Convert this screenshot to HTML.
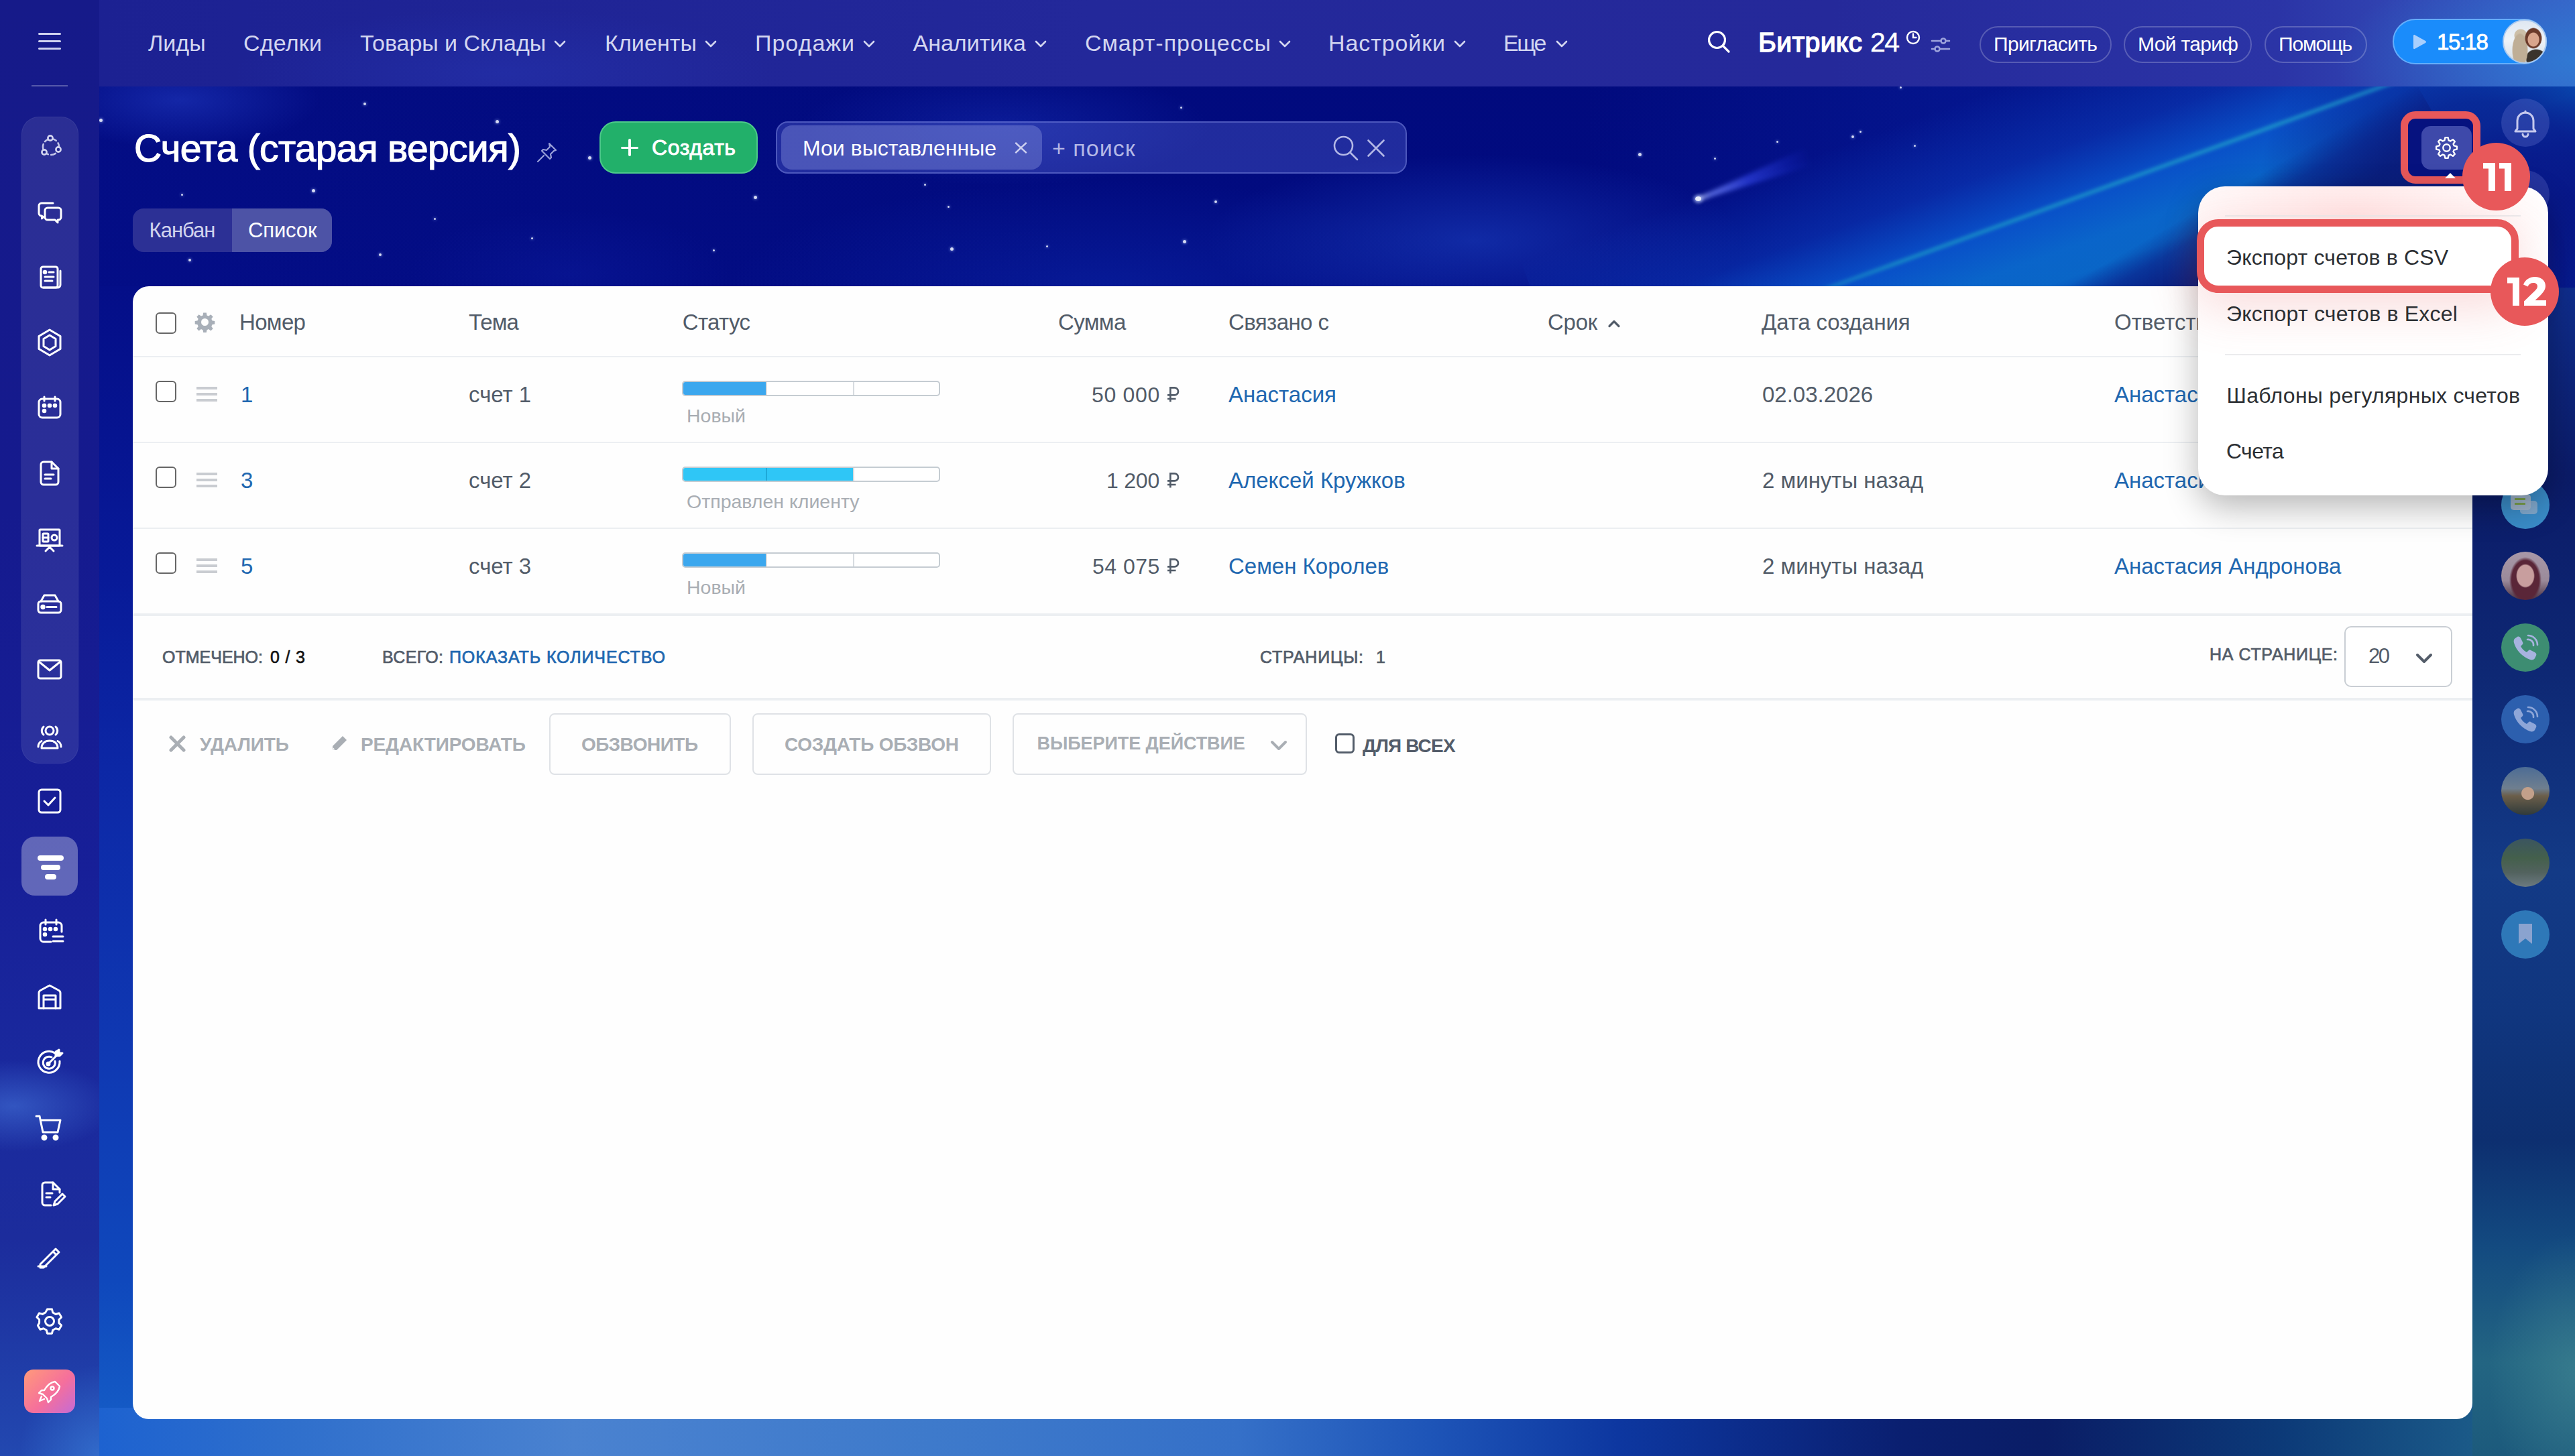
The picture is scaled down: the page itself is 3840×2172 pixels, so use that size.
<!DOCTYPE html>
<html><head><meta charset="utf-8"><style>
*{margin:0;padding:0;box-sizing:border-box}
html,body{width:3840px;height:2172px;overflow:hidden;font-family:"Liberation Sans",sans-serif}
body{position:relative;background:#020b80}
.a{position:absolute}
.t{position:absolute;white-space:nowrap;line-height:1}
svg{position:absolute;overflow:visible}
</style></head><body>
<div class="a" style="left:0;top:0;width:3840px;height:2172px;background:linear-gradient(180deg,#010a7c 0%,#020c84 30%,#041a9c 60%,#0a40b8 85%,#1458c0 100%)"></div>
<div class="a" style="left:148px;top:129px;width:3692px;height:300px;background:
 radial-gradient(ellipse 260px 90px at 120px 20px, rgba(40,70,210,.45), rgba(0,0,0,0) 80%),
 radial-gradient(ellipse 380px 110px at 1350px 60px, rgba(30,60,200,.35), rgba(0,0,0,0) 80%),
 radial-gradient(ellipse 500px 160px at 2050px 230px, rgba(35,80,210,.45), rgba(0,0,0,0) 80%),
 radial-gradient(ellipse 700px 200px at 1500px 300px, rgba(20,60,200,.3), rgba(0,0,0,0) 80%),
 radial-gradient(ellipse 300px 120px at 700px 280px, rgba(20,40,180,.25), rgba(0,0,0,0) 80%),
 linear-gradient(90deg, rgba(10,20,150,.25) 0%, rgba(0,0,0,0) 40%, rgba(0,0,0,0) 60%, rgba(10,40,170,.35) 75%, rgba(20,90,200,.2) 100%)"></div>
<div class="a" style="left:2300px;top:50px;width:1900px;height:520px;transform:rotate(-20deg);transform-origin:50% 50%;
 background:linear-gradient(180deg, rgba(0,0,0,0) 0%, rgba(15,80,210,.35) 22%, rgba(10,95,215,.8) 38%, rgba(10,105,205,.95) 50%, rgba(10,110,205,.9) 58%, rgba(8,70,180,.55) 72%, rgba(8,30,130,.25) 85%, rgba(0,0,0,0) 100%)"></div>
<div class="a" style="left:3300px;top:129px;width:540px;height:320px;background:radial-gradient(ellipse 330px 260px at 400px 140px, rgba(8,22,135,.92) 0%, rgba(8,22,135,.75) 45%, rgba(8,22,135,0) 100%)"></div>
<div class="a" style="left:2950px;top:300px;width:700px;height:300px;transform:rotate(-30deg);transform-origin:50% 0;
 background:linear-gradient(180deg, rgba(10,30,130,0) 0%, rgba(10,30,130,.55) 12%, rgba(10,28,120,.85) 30%, rgba(10,28,120,.9) 100%)"></div>
<div class="a" style="left:2500px;top:236px;width:1500px;height:6px;transform:rotate(-20deg);transform-origin:50% 50%;
 background:linear-gradient(90deg, rgba(30,170,200,0) 0%, rgba(30,170,200,.6) 20%, rgba(35,175,205,.65) 60%, rgba(40,170,220,.35) 100%);filter:blur(2.5px)"></div>
<div class="a" style="left:2530px;top:284px;width:180px;height:28px;transform:rotate(-21deg);transform-origin:0 50%;filter:blur(3px)">
 <div class="a" style="left:0;top:0;width:180px;height:28px;clip-path:polygon(0 42%, 100% 0, 100% 100%, 0 58%);
 background:linear-gradient(90deg, rgba(220,230,255,.95) 0%, rgba(120,140,255,.75) 12%, rgba(60,80,250,.55) 45%, rgba(40,60,240,.2) 80%, rgba(30,50,230,0) 100%)"></div></div>
<div class="a" style="left:2528px;top:293px;width:9px;height:7px;border-radius:50%;background:rgba(240,245,255,.95);box-shadow:0 0 5px 2px rgba(180,200,255,.7)"></div>
<div class="a" style="left:542.0px;top:153.0px;width:4px;height:4px;border-radius:50%;background:rgba(235,240,255,.9);box-shadow:0 0 4px rgba(180,200,255,.8)"></div>
<div class="a" style="left:738.5px;top:178.5px;width:5px;height:5px;border-radius:50%;background:rgba(235,240,255,.9);box-shadow:0 0 4px rgba(180,200,255,.8)"></div>
<div class="a" style="left:147.5px;top:176.5px;width:5px;height:5px;border-radius:50%;background:rgba(235,240,255,.9);box-shadow:0 0 4px rgba(180,200,255,.8)"></div>
<div class="a" style="left:876.5px;top:232.5px;width:5px;height:5px;border-radius:50%;background:rgba(235,240,255,.9);box-shadow:0 0 4px rgba(180,200,255,.8)"></div>
<div class="a" style="left:464.5px;top:281.5px;width:5px;height:5px;border-radius:50%;background:rgba(235,240,255,.9);box-shadow:0 0 4px rgba(180,200,255,.8)"></div>
<div class="a" style="left:1123.5px;top:291.5px;width:5px;height:5px;border-radius:50%;background:rgba(235,240,255,.9);box-shadow:0 0 4px rgba(180,200,255,.8)"></div>
<div class="a" style="left:1062.5px;top:371.5px;width:3px;height:3px;border-radius:50%;background:rgba(235,240,255,.9);box-shadow:0 0 4px rgba(180,200,255,.8)"></div>
<div class="a" style="left:646.5px;top:324.5px;width:3px;height:3px;border-radius:50%;background:rgba(235,240,255,.9);box-shadow:0 0 4px rgba(180,200,255,.8)"></div>
<div class="a" style="left:269.5px;top:288.5px;width:3px;height:3px;border-radius:50%;background:rgba(235,240,255,.9);box-shadow:0 0 4px rgba(180,200,255,.8)"></div>
<div class="a" style="left:565.0px;top:378.0px;width:4px;height:4px;border-radius:50%;background:rgba(235,240,255,.9);box-shadow:0 0 4px rgba(180,200,255,.8)"></div>
<div class="a" style="left:281.0px;top:386.0px;width:4px;height:4px;border-radius:50%;background:rgba(235,240,255,.9);box-shadow:0 0 4px rgba(180,200,255,.8)"></div>
<div class="a" style="left:791.5px;top:353.5px;width:3px;height:3px;border-radius:50%;background:rgba(235,240,255,.9);box-shadow:0 0 4px rgba(180,200,255,.8)"></div>
<div class="a" style="left:1759.5px;top:158.5px;width:3px;height:3px;border-radius:50%;background:rgba(235,240,255,.9);box-shadow:0 0 4px rgba(180,200,255,.8)"></div>
<div class="a" style="left:1763.5px;top:357.5px;width:5px;height:5px;border-radius:50%;background:rgba(235,240,255,.9);box-shadow:0 0 4px rgba(180,200,255,.8)"></div>
<div class="a" style="left:1416.5px;top:368.5px;width:5px;height:5px;border-radius:50%;background:rgba(235,240,255,.9);box-shadow:0 0 4px rgba(180,200,255,.8)"></div>
<div class="a" style="left:1377.5px;top:273.5px;width:3px;height:3px;border-radius:50%;background:rgba(235,240,255,.9);box-shadow:0 0 4px rgba(180,200,255,.8)"></div>
<div class="a" style="left:1811.0px;top:299.0px;width:4px;height:4px;border-radius:50%;background:rgba(235,240,255,.9);box-shadow:0 0 4px rgba(180,200,255,.8)"></div>
<div class="a" style="left:1412.5px;top:306.5px;width:3px;height:3px;border-radius:50%;background:rgba(235,240,255,.9);box-shadow:0 0 4px rgba(180,200,255,.8)"></div>
<div class="a" style="left:1559.5px;top:365.5px;width:3px;height:3px;border-radius:50%;background:rgba(235,240,255,.9);box-shadow:0 0 4px rgba(180,200,255,.8)"></div>
<div class="a" style="left:2442.5px;top:227.5px;width:5px;height:5px;border-radius:50%;background:rgba(235,240,255,.9);box-shadow:0 0 4px rgba(180,200,255,.8)"></div>
<div class="a" style="left:2555.5px;top:234.5px;width:3px;height:3px;border-radius:50%;background:rgba(235,240,255,.9);box-shadow:0 0 4px rgba(180,200,255,.8)"></div>
<div class="a" style="left:2761.0px;top:202.0px;width:4px;height:4px;border-radius:50%;background:rgba(235,240,255,.9);box-shadow:0 0 4px rgba(180,200,255,.8)"></div>
<div class="a" style="left:2772.5px;top:194.5px;width:3px;height:3px;border-radius:50%;background:rgba(235,240,255,.9);box-shadow:0 0 4px rgba(180,200,255,.8)"></div>
<div class="a" style="left:2648.5px;top:209.5px;width:3px;height:3px;border-radius:50%;background:rgba(235,240,255,.9);box-shadow:0 0 4px rgba(180,200,255,.8)"></div>
<div class="a" style="left:2853.5px;top:215.5px;width:3px;height:3px;border-radius:50%;background:rgba(235,240,255,.9);box-shadow:0 0 4px rgba(180,200,255,.8)"></div>
<div class="a" style="left:2832.5px;top:128.5px;width:3px;height:3px;border-radius:50%;background:rgba(235,240,255,.9);box-shadow:0 0 4px rgba(180,200,255,.8)"></div>
<div class="a" style="left:148px;top:427px;width:60px;height:1745px;background:linear-gradient(180deg,#040e88 0%,#081a98 25%,#0d2aa8 45%,#0f38b2 65%,#0f48bc 85%,#1660c8 100%)"></div>
<div class="a" style="left:3687px;top:429px;width:153px;height:1743px;background:
 radial-gradient(ellipse 160px 260px at 153px 1620px, rgba(70,140,150,.55), rgba(0,0,0,0) 80%),
 linear-gradient(180deg,#0f2d8c 0%,#0b1b68 16%,#0e2874 33%,#133a86 50%,#10367f 62%,#0d2f70 73%,#134a80 82%,#236582 92%,#1c5a7c 100%)"></div>
<div class="a" style="left:148px;top:2100px;width:3539px;height:72px;background:
 linear-gradient(90deg, #1d62d0 0%, #2f6fcc 8%, #4a82d0 20%, #3e7acb 35%, #3570c8 48%, #1e55b8 56%, #0d37a0 64%, #0a1f70 76%, #0a1d66 82%, #0c3a78 92%, #1b5a88 100%)"></div>
<div class="a" style="left:0;top:0;width:148px;height:2172px;background:
 radial-gradient(ellipse 180px 80px at 20px 1650px, rgba(70,120,220,.55), rgba(0,0,0,0) 85%),
 radial-gradient(ellipse 140px 160px at 148px 2172px, rgba(60,130,220,.6), rgba(0,0,0,0) 85%),
 linear-gradient(180deg,#161a89 0%,#151a8e 35%,#171f98 60%,#1a2a9e 75%,#1c2c9c 85%,#2248b0 100%)"></div>
<div class="a" style="left:47px;top:127px;width:54px;height:2px;background:rgba(255,255,255,.28)"></div>
<div class="a" style="left:32px;top:174px;width:85px;height:965px;border-radius:26px;background:rgba(255,255,255,.09);border:1px solid rgba(255,255,255,.06)"></div>
<div class="a" style="left:32px;top:1248px;width:84px;height:88px;border-radius:20px;background:rgba(255,255,255,.32)"></div>
<div class="a" style="left:36px;top:2043px;width:76px;height:65px;border-radius:14px;background:linear-gradient(135deg,#ff9a7a 0%,#f56f9c 55%,#c46bd6 100%)"></div>
<div class="a" style="left:57px;top:49px;width:34px;height:3px;border-radius:2px;background:#cfd2ef"></div>
<div class="a" style="left:57px;top:60px;width:34px;height:3px;border-radius:2px;background:#cfd2ef"></div>
<div class="a" style="left:57px;top:71px;width:34px;height:3px;border-radius:2px;background:#cfd2ef"></div>
<svg style="left:54.0px;top:196.5px" width="44" height="44" viewBox="0 0 44 44" fill="none" stroke="#d4d6f0" stroke-width="2.6" stroke-linecap="round" stroke-linejoin="round" opacity="1"><circle cx="22" cy="22" r="12" stroke-dasharray="7 4.5" opacity=".9"/><circle cx="21" cy="9" r="3.6" fill="#24288f"/><circle cx="33" cy="26" r="3.6" fill="#24288f"/><circle cx="12" cy="30" r="3.6" fill="#24288f"/></svg>
<svg style="left:52.0px;top:294.0px" width="44" height="44" viewBox="0 0 44 44" fill="none" stroke="#ffffff" stroke-width="3" stroke-linecap="round" stroke-linejoin="round" opacity="1"><path d="M27 9H10a4 4 0 0 0-4 4v11a4 4 0 0 0 4 4h0.5v4l3-3"/><path d="M19 16h16a4 4 0 0 1 4 4v10a4 4 0 0 1-4 4h-1v4l-4-4H19a4 4 0 0 1-4-4V20a4 4 0 0 1 4-4z"/></svg>
<svg style="left:53.0px;top:391.0px" width="44" height="44" viewBox="0 0 44 44" fill="none" stroke="#ffffff" stroke-width="3" stroke-linecap="round" stroke-linejoin="round" opacity="1"><rect x="8" y="7" width="25" height="31" rx="3"/><path d="M37 13v21a4 4 0 0 1-4 4H12"/><circle cx="14" cy="15" r="1.8" fill="#fff"/><path d="M20 15h7M14 22h13M14 28h11"/></svg>
<svg style="left:52.0px;top:489.0px" width="44" height="44" viewBox="0 0 44 44" fill="none" stroke="#ffffff" stroke-width="3" stroke-linecap="round" stroke-linejoin="round" opacity="1"><path d="M22 3 38 12.5v19L22 41 6 31.5v-19z"/><path d="M22 11 31 16.5v11L22 33 13 27.5v-11z"/></svg>
<svg style="left:52.0px;top:586.0px" width="44" height="44" viewBox="0 0 44 44" fill="none" stroke="#ffffff" stroke-width="3" stroke-linecap="round" stroke-linejoin="round" opacity="1"><rect x="6" y="9" width="32" height="28" rx="5"/><path d="M14 6v6M30 6v6"/><circle cx="14" cy="19" r="1.8" fill="#fff"/><circle cx="22" cy="19" r="1.8" fill="#fff"/><circle cx="30" cy="19" r="1.8" fill="#fff"/><circle cx="14" cy="27" r="1.8" fill="#fff"/></svg>
<svg style="left:52.0px;top:684.0px" width="44" height="44" viewBox="0 0 44 44" fill="none" stroke="#ffffff" stroke-width="3" stroke-linecap="round" stroke-linejoin="round" opacity="1"><path d="M25 5H13a4 4 0 0 0-4 4v26a4 4 0 0 0 4 4h18a4 4 0 0 0 4-4V15z"/><path d="M25 5v10h10"/><path d="M15 24h13M15 30h9"/></svg>
<svg style="left:52.0px;top:785.0px" width="44" height="44" viewBox="0 0 44 44" fill="none" stroke="#ffffff" stroke-width="3" stroke-linecap="round" stroke-linejoin="round" opacity="1"><rect x="7" y="5" width="30" height="24" rx="1"/><path d="M3 29h38M16 37l6-6 6 6"/><rect x="12" y="11" width="8" height="12" rx="1"/><path d="M12 17h8"/><circle cx="29" cy="17" r="4"/></svg>
<svg style="left:52.0px;top:879.0px" width="44" height="44" viewBox="0 0 44 44" fill="none" stroke="#ffffff" stroke-width="3" stroke-linecap="round" stroke-linejoin="round" opacity="1"><path d="M9 18 14 9h16l5 9"/><rect x="5" y="18" width="34" height="17" rx="4"/><circle cx="12" cy="26.5" r="2.2" fill="#fff"/><path d="M18 26.5h14"/></svg>
<svg style="left:52.4px;top:977.0px" width="44" height="44" viewBox="0 0 44 44" fill="none" stroke="#ffffff" stroke-width="3" stroke-linecap="round" stroke-linejoin="round" opacity="1"><rect x="5" y="8" width="34" height="27" rx="3"/><path d="M6 10l16 13 16-13"/></svg>
<svg style="left:52.0px;top:1075.5px" width="44" height="44" viewBox="0 0 44 44" fill="none" stroke="#ffffff" stroke-width="3" stroke-linecap="round" stroke-linejoin="round" opacity="1"><circle cx="22" cy="14" r="6"/><path d="M10 40c0-7 5-11 12-11s12 4 12 11z"/><path d="M13 8a8 8 0 0 0 0 12M31 8a8 8 0 0 1 0 12M5 38c0-4 2-7 5-8.5M39 38c0-4-2-7-5-8.5"/></svg>
<svg style="left:52.0px;top:1173.0px" width="44" height="44" viewBox="0 0 44 44" fill="none" stroke="#ffffff" stroke-width="3" stroke-linecap="round" stroke-linejoin="round" opacity="1"><rect x="6" y="5" width="32" height="34" rx="4"/><path d="M14 22l6 6 10-11"/></svg>
<svg style="left:53.6px;top:1366.5px" width="44" height="44" viewBox="0 0 44 44" fill="none" stroke="#ffffff" stroke-width="3" stroke-linecap="round" stroke-linejoin="round" opacity="1"><path d="M22 38H11a5 5 0 0 1-5-5V14a5 5 0 0 1 5-5h22a5 5 0 0 1 5 5v9"/><path d="M14 5v7M30 5v7"/><circle cx="13" cy="19" r="1.8" fill="#fff"/><circle cx="21" cy="19" r="1.8" fill="#fff"/><circle cx="29" cy="19" r="1.8" fill="#fff"/><circle cx="13" cy="27" r="1.8" fill="#fff"/><path d="M25 30h15M25 37h15"/></svg>
<svg style="left:52.0px;top:1465.0px" width="44" height="44" viewBox="0 0 44 44" fill="none" stroke="#ffffff" stroke-width="3" stroke-linecap="round" stroke-linejoin="round" opacity="1"><path d="M6 39V16c0-2 1-3 3-4l13-7 13 7c2 1 3 2 3 4v23z"/><path d="M13 39V20h18v19M13 26h18"/></svg>
<svg style="left:52.4px;top:1563.0px" width="44" height="44" viewBox="0 0 44 44" fill="none" stroke="#ffffff" stroke-width="3" stroke-linecap="round" stroke-linejoin="round" opacity="1"><path d="M30 8A16 16 0 1 0 37 20"/><path d="M25 14a9 9 0 1 0 5 6"/><circle cx="20" cy="24" r="2" fill="#fff"/><path d="M20 24 33 11"/><path d="M31 6v6h6l4-4h-5V3z" fill="#fff"/></svg>
<svg style="left:51.0px;top:1661.0px" width="44" height="44" viewBox="0 0 44 44" fill="none" stroke="#ffffff" stroke-width="3" stroke-linecap="round" stroke-linejoin="round" opacity="1"><path d="M3 4h5l5 24h22l4-18H10"/><circle cx="15" cy="36" r="3" fill="#fff"/><circle cx="32" cy="36" r="3" fill="#fff"/></svg>
<svg style="left:53.6px;top:1759.0px" width="44" height="44" viewBox="0 0 44 44" fill="none" stroke="#ffffff" stroke-width="3" stroke-linecap="round" stroke-linejoin="round" opacity="1"><path d="M22 39H13a4 4 0 0 1-4-4V9a4 4 0 0 1 4-4h12l10 10v5"/><path d="M25 5v10h10"/><path d="M15 21h9M15 27h6"/><path d="M26 39l2-6 11-11 4 4-11 11z"/></svg>
<svg style="left:51.7px;top:1850.0px" width="44" height="44" viewBox="0 0 44 44" fill="none" stroke="#ffffff" stroke-width="3" stroke-linecap="round" stroke-linejoin="round" opacity="1"><path d="M8 36 31 13l5 5-23 23H8v-5zM27 17l5 5"/><path d="M5 39h12"/></svg>
<svg style="left:52.4px;top:1949.0px" width="44" height="44" viewBox="0 0 44 44" fill="none" stroke="#ffffff" stroke-width="3" stroke-linecap="round" stroke-linejoin="round" opacity="1"><circle cx="22" cy="22" r="6.5"/><path d="M18.5 4h7l1.2 5 4.4 2.5 5-1.5 3.5 6-3.7 3.6v5l3.7 3.6-3.5 6-5-1.5-4.4 2.5-1.2 5h-7l-1.2-5-4.4-2.5-5 1.5-3.5-6L6.6 24.5v-5L2.9 15.9l3.5-6 5 1.5 4.4-2.5z"/></svg>
<svg style="left:52.0px;top:2053.0px" width="44" height="44" viewBox="0 0 44 44" fill="none" stroke="#ffffff" stroke-width="2.4" stroke-linecap="round" stroke-linejoin="round" opacity="1"><path d="M30 8c-7 1-12 6-16 13l-4 0-4 4 6 2 6 6 2 6 4-4v-4c7-4 12-9 13-16z"/><circle cx="26" cy="18" r="2.5"/><path d="M10 30l-3 7 7-3"/></svg>
<div class="a" style="left:56px;top:1276px;width:39px;height:8px;border-radius:4px;background:#fff"></div>
<div class="a" style="left:61px;top:1290px;width:29px;height:8px;border-radius:4px;background:#fff"></div>
<div class="a" style="left:67px;top:1304px;width:17px;height:8px;border-radius:4px;background:#fff"></div>
<div class="a" style="left:148px;top:0;width:3692px;height:129px;background:
 radial-gradient(ellipse 420px 180px at 3692px 90px, rgba(45,130,215,.75), rgba(0,0,0,0) 85%),
 radial-gradient(ellipse 500px 120px at 600px 110px, rgba(40,60,190,.35), rgba(0,0,0,0) 80%),
 linear-gradient(90deg,#1c2192 0%,#23289a 40%,#25299a 70%,#2b34a6 88%,#3a5cc4 100%)"></div>
<div class="t" style="left:221.0px;top:47.2px;font-size:34px;letter-spacing:-0.00px;color:#d3d6f0;">Лиды</div>
<div class="t" style="left:363.0px;top:47.2px;font-size:34px;letter-spacing:0.21px;color:#d3d6f0;">Сделки</div>
<div class="t" style="left:537.0px;top:47.2px;font-size:34px;letter-spacing:-0.04px;color:#d3d6f0;">Товары и Склады</div>
<svg style="left:826px;top:60px" width="18" height="11" viewBox="0 0 18 11" fill="none" stroke="#d3d6f0" stroke-width="2.6" stroke-linecap="round" stroke-linejoin="round"><path d="M2 2l7 7 7-7"/></svg>
<div class="t" style="left:902.0px;top:47.2px;font-size:34px;letter-spacing:0.11px;color:#d3d6f0;">Клиенты</div>
<svg style="left:1051px;top:60px" width="18" height="11" viewBox="0 0 18 11" fill="none" stroke="#d3d6f0" stroke-width="2.6" stroke-linecap="round" stroke-linejoin="round"><path d="M2 2l7 7 7-7"/></svg>
<div class="t" style="left:1126.0px;top:47.2px;font-size:34px;letter-spacing:1.01px;color:#d3d6f0;">Продажи</div>
<svg style="left:1287px;top:60px" width="18" height="11" viewBox="0 0 18 11" fill="none" stroke="#d3d6f0" stroke-width="2.6" stroke-linecap="round" stroke-linejoin="round"><path d="M2 2l7 7 7-7"/></svg>
<div class="t" style="left:1361.5px;top:47.2px;font-size:34px;letter-spacing:0.00px;color:#d3d6f0;">Аналитика</div>
<svg style="left:1543px;top:60px" width="18" height="11" viewBox="0 0 18 11" fill="none" stroke="#d3d6f0" stroke-width="2.6" stroke-linecap="round" stroke-linejoin="round"><path d="M2 2l7 7 7-7"/></svg>
<div class="t" style="left:1618.0px;top:47.2px;font-size:34px;letter-spacing:0.96px;color:#d3d6f0;">Смарт-процессы</div>
<svg style="left:1907px;top:60px" width="18" height="11" viewBox="0 0 18 11" fill="none" stroke="#d3d6f0" stroke-width="2.6" stroke-linecap="round" stroke-linejoin="round"><path d="M2 2l7 7 7-7"/></svg>
<div class="t" style="left:1981.0px;top:47.2px;font-size:34px;letter-spacing:0.90px;color:#d3d6f0;">Настройки</div>
<svg style="left:2168px;top:60px" width="18" height="11" viewBox="0 0 18 11" fill="none" stroke="#d3d6f0" stroke-width="2.6" stroke-linecap="round" stroke-linejoin="round"><path d="M2 2l7 7 7-7"/></svg>
<div class="t" style="left:2242.0px;top:47.2px;font-size:34px;letter-spacing:-2.34px;color:#d3d6f0;">Еще</div>
<svg style="left:2320px;top:60px" width="18" height="11" viewBox="0 0 18 11" fill="none" stroke="#d3d6f0" stroke-width="2.6" stroke-linecap="round" stroke-linejoin="round"><path d="M2 2l7 7 7-7"/></svg>
<svg style="left:2546px;top:45px" width="34" height="34" viewBox="0 0 34 34" fill="none" stroke="#fff" stroke-width="3.2" stroke-linecap="round"><circle cx="14.5" cy="14.5" r="12"/><path d="M23.5 23.5 32 32"/></svg>
<div class="t" style="left:2622.0px;top:43.3px;font-size:41px;letter-spacing:0.31px;color:#fff;-webkit-text-stroke:1.5px #fff;">Битрикс</div>
<div class="t" style="left:2789.0px;top:43.3px;font-size:41px;letter-spacing:-1.51px;color:#fff;-webkit-text-stroke:0.4px #fff;">24</div>
<svg style="left:2842px;top:45px" width="22" height="22" viewBox="0 0 22 22" fill="none" stroke="#fff" stroke-width="2.4" stroke-linecap="round"><circle cx="11" cy="11" r="9"/><path d="M11 5.5V11h4.5"/></svg>
<svg style="left:2880px;top:55px" width="28" height="24" viewBox="0 0 28 24" fill="none" stroke="#9ea4dc" stroke-width="2.6" stroke-linecap="round"><path d="M1 6h26M1 18h26"/><circle cx="18" cy="6" r="3.5" fill="#24299b"/><circle cx="9" cy="18" r="3.5" fill="#24299b"/></svg>
<div class="a" style="left:2952px;top:39px;width:197px;height:55px;border-radius:28px;border:2px solid rgba(255,255,255,.22)"></div>
<div class="t" style="left:2973.0px;top:50.6px;font-size:30px;letter-spacing:-0.63px;color:#fff;">Пригласить</div>
<div class="a" style="left:3167px;top:39px;width:191px;height:55px;border-radius:28px;border:2px solid rgba(255,255,255,.22)"></div>
<div class="t" style="left:3188.0px;top:50.6px;font-size:30px;letter-spacing:-0.66px;color:#fff;">Мой тариф</div>
<div class="a" style="left:3377px;top:39px;width:153px;height:55px;border-radius:28px;border:2px solid rgba(255,255,255,.22)"></div>
<div class="t" style="left:3398.0px;top:50.6px;font-size:30px;letter-spacing:-1.16px;color:#fff;">Помощь</div>
<div class="a" style="left:3568px;top:28px;width:230px;height:68px;border-radius:34px;background:#1a8cfb;border:2px solid #64aefc"></div>
<svg style="left:3597px;top:50px" width="22" height="25" viewBox="0 0 22 25"><path d="M2 3.5Q2 1 4.3 2.2L20 11q2 1.5 0 3L4.3 22.8Q2 24 2 21.5z" fill="#a9cffd"/></svg>
<div class="t" style="left:3634.0px;top:46.1px;font-size:33px;letter-spacing:-1.42px;color:#fff;-webkit-text-stroke:0.8px #fff;">15:18</div>
<div class="a" style="left:3732px;top:29px;width:66px;height:66px;border-radius:50%;overflow:hidden;border:2px solid #a9c9f0;
 background:
 radial-gradient(ellipse 9px 11px at 44px 28px, #d9a58c 0 90%, rgba(0,0,0,0) 100%),
 radial-gradient(ellipse 13px 16px at 44px 26px, #6b3a2a 0 90%, rgba(0,0,0,0) 100%),
 radial-gradient(ellipse 12px 26px at 24px 44px, #bfae96 0 90%, rgba(0,0,0,0) 100%),
 radial-gradient(ellipse 10px 10px at 25px 22px, #cdbfa8 0 90%, rgba(0,0,0,0) 100%),
 radial-gradient(ellipse 16px 14px at 48px 56px, #3a332c 0 90%, rgba(0,0,0,0) 100%),
 linear-gradient(180deg,#dfe7f1 0%,#eef3f8 45%,#d5dde6 100%)"></div>
<div class="t" style="left:200.0px;top:192.7px;font-size:57px;letter-spacing:-0.70px;color:#fff;-webkit-text-stroke:1.2px #fff;">Счета (старая версия)</div>
<svg style="left:800px;top:211px" width="32" height="32" viewBox="0 0 32 32" fill="none" stroke="#9aa0d8" stroke-width="2.2" stroke-linecap="round" stroke-linejoin="round"><path d="M19 3l10 10-3 1-5 5 1 5-2 2-12-12 2-2 5 1 5-5z"/><path d="M11 21 2 30"/></svg>
<div class="a" style="left:894px;top:181px;width:236px;height:78px;border-radius:24px;background:#22b06a;border:2px solid #4cc98a"></div>
<div class="a" style="left:926px;top:218.5px;width:26px;height:3.2px;background:#fff;border-radius:2px"></div><div class="a" style="left:937.4px;top:207px;width:3.2px;height:26px;background:#fff;border-radius:2px"></div>
<div class="t" style="left:972.0px;top:203.9px;font-size:32px;letter-spacing:0.57px;color:#fff;-webkit-text-stroke:0.9px #fff;">Создать</div>
<div class="a" style="left:1157px;top:181px;width:941px;height:78px;border-radius:18px;background:rgba(100,115,225,.32);border:2px solid rgba(150,160,240,.38)"></div>
<div class="a" style="left:1165px;top:187px;width:389px;height:66px;border-radius:16px;background:rgba(125,135,215,.45)"></div>
<div class="t" style="left:1197.0px;top:204.9px;font-size:32px;letter-spacing:0.03px;color:#fff;">Мои выставленные</div>
<svg style="left:1513px;top:212px" width="19" height="17" viewBox="0 0 19 17" fill="none" stroke="#cdd0f0" stroke-width="2.4" stroke-linecap="round"><path d="M2 1.5l15 14M17 1.5l-15 14"/></svg>
<div class="t" style="left:1569.0px;top:204.2px;font-size:34px;letter-spacing:1.03px;color:#b4b8e6;">+ поиск</div>
<svg style="left:1988px;top:202px" width="38" height="38" viewBox="0 0 38 38" fill="none" stroke="#b4b8e6" stroke-width="2.6" stroke-linecap="round"><circle cx="15.5" cy="15.5" r="13.5"/><path d="M25.5 25.5 36 36"/></svg>
<svg style="left:2039px;top:208px" width="26" height="26" viewBox="0 0 26 26" fill="none" stroke="#b4b8e6" stroke-width="2.6" stroke-linecap="round"><path d="M1.5 1.5l23 23M24.5 1.5l-23 23"/></svg>
<div class="a" style="left:198px;top:311px;width:297px;height:65px;border-radius:16px;overflow:hidden;background:#2c3095"><div class="a" style="left:148px;top:0;width:149px;height:65px;background:#4d53a6"></div></div>
<div class="t" style="left:222.6px;top:327.8px;font-size:31px;letter-spacing:-0.99px;color:#d2d4ee;">Канбан</div>
<div class="t" style="left:370.0px;top:327.8px;font-size:31px;letter-spacing:-0.14px;color:#fff;">Список</div>
<div class="a" style="left:198px;top:427px;width:3489px;height:1690px;background:#fefefe;border-radius:24px"></div>
<div class="a" style="left:198px;top:531px;width:3489px;height:2px;background:#eceff2"></div>
<div class="a" style="left:198px;top:659px;width:3489px;height:2px;background:#eceff2"></div>
<div class="a" style="left:198px;top:787px;width:3489px;height:2px;background:#eceff2"></div>
<div class="a" style="left:198px;top:915px;width:3489px;height:4px;background:#eceff2"></div>
<div class="a" style="left:198px;top:1041px;width:3489px;height:4px;background:#eceff2"></div>
<div class="a" style="left:232px;top:466px;width:31px;height:32px;border:2.3px solid #666;border-radius:6px;background:#fff"></div>
<svg style="left:290px;top:465px" width="31" height="31" viewBox="0 0 31 31"><path fill="#a8afb8" d="M13.2 1.5h4.6l.7 3.9 2.6 1.1 3.3-2.3 3.2 3.2-2.3 3.3 1.1 2.6 3.9.7v4.6l-3.9.7-1.1 2.6 2.3 3.3-3.2 3.2-3.3-2.3-2.6 1.1-.7 3.9h-4.6l-.7-3.9-2.6-1.1-3.3 2.3-3.2-3.2 2.3-3.3-1.1-2.6-3.9-.7v-4.6l3.9-.7 1.1-2.6-2.3-3.3 3.2-3.2 3.3 2.3 2.6-1.1zM15.5 10a5.5 5.5 0 1 0 0 11 5.5 5.5 0 0 0 0-11z"/></svg>
<div class="t" style="left:357.0px;top:464.1px;font-size:33px;letter-spacing:-0.66px;color:#525c69;">Номер</div>
<div class="t" style="left:699.0px;top:464.1px;font-size:33px;letter-spacing:-0.96px;color:#525c69;">Тема</div>
<div class="t" style="left:1017.7px;top:464.1px;font-size:33px;letter-spacing:-0.60px;color:#525c69;">Статус</div>
<div class="t" style="left:1578.0px;top:464.1px;font-size:33px;letter-spacing:-0.60px;color:#525c69;">Сумма</div>
<div class="t" style="left:1832.0px;top:464.1px;font-size:33px;letter-spacing:-0.58px;color:#525c69;">Связано с</div>
<div class="t" style="left:2308.0px;top:464.1px;font-size:33px;letter-spacing:-0.25px;color:#525c69;">Срок</div>
<div class="t" style="left:2627.0px;top:464.1px;font-size:33px;letter-spacing:-0.16px;color:#525c69;">Дата создания</div>
<div class="t" style="left:3153.0px;top:464.1px;font-size:33px;letter-spacing:0.00px;color:#525c69;">Ответственный</div>
<svg style="left:2397px;top:476px" width="20" height="13" viewBox="0 0 20 13" fill="none" stroke="#525c69" stroke-width="3.2" stroke-linecap="round" stroke-linejoin="round"><path d="M3 10.5l7-7 7 7"/></svg>
<div class="a" style="left:232px;top:568px;width:31px;height:32px;border:2.3px solid #666;border-radius:6px;background:#fff"></div>
<div class="a" style="left:292.5px;top:576.5px;width:31px;height:4px;background:#c9ccd1"></div>
<div class="a" style="left:292.5px;top:585.8px;width:31px;height:4px;background:#c9ccd1"></div>
<div class="a" style="left:292.5px;top:595.1px;width:31px;height:4px;background:#c9ccd1"></div>
<div class="t" style="left:359.0px;top:572.1px;font-size:33px;letter-spacing:0.00px;color:#2067b0;">1</div>
<div class="t" style="left:699.0px;top:572.1px;font-size:33px;letter-spacing:0.00px;color:#525c69;">счет 1</div>
<div class="a" style="left:1017px;top:568px;width:385px;height:23px;border:2px solid #c5ccd2;border-radius:5px;background:#fff;overflow:hidden"><div class="a" style="left:0;top:0;width:125px;height:19px;background:#3ba7ee"></div><div class="a" style="left:123px;top:0;width:2px;height:19px;background:#d7dce0"></div><div class="a" style="left:253px;top:0;width:2px;height:19px;background:#d7dce0"></div></div>
<div class="t" style="left:1024.0px;top:605.9px;font-size:28.5px;letter-spacing:0.00px;color:#a8adb3;">Новый</div>
<div class="t" style="left:1628.0px;top:572.9px;font-size:32px;letter-spacing:0.68px;color:#525c69;">50 000</div>
<svg style="left:0;top:0px" width="1800" height="620" viewBox="0 0 1800 620" fill="none" stroke="#525c69" stroke-width="2.7"><path d="M1745.3 577V599.5M1745.3 578.4H1751.5a5.5 5.5 0 0 1 0 11H1741M1741 595H1753.5"/></svg>
<div class="t" style="left:1832.0px;top:572.1px;font-size:33px;letter-spacing:0.00px;color:#2067b0;">Анастасия</div>
<div class="t" style="left:2628.0px;top:572.1px;font-size:33px;letter-spacing:0.00px;color:#525c69;">02.03.2026</div>
<div class="t" style="left:3153.0px;top:572.1px;font-size:33px;letter-spacing:0.00px;color:#2067b0;">Анастасия Андронова</div>
<div class="a" style="left:232px;top:696px;width:31px;height:32px;border:2.3px solid #666;border-radius:6px;background:#fff"></div>
<div class="a" style="left:292.5px;top:704.5px;width:31px;height:4px;background:#c9ccd1"></div>
<div class="a" style="left:292.5px;top:713.8px;width:31px;height:4px;background:#c9ccd1"></div>
<div class="a" style="left:292.5px;top:723.1px;width:31px;height:4px;background:#c9ccd1"></div>
<div class="t" style="left:359.0px;top:700.1px;font-size:33px;letter-spacing:0.00px;color:#2067b0;">3</div>
<div class="t" style="left:699.0px;top:700.1px;font-size:33px;letter-spacing:0.00px;color:#525c69;">счет 2</div>
<div class="a" style="left:1017px;top:696px;width:385px;height:23px;border:2px solid #c5ccd2;border-radius:5px;background:#fff;overflow:hidden"><div class="a" style="left:0;top:0;width:255px;height:19px;background:#2fc6f6"></div><div class="a" style="left:123px;top:0;width:2px;height:19px;background:#1ea9d8"></div><div class="a" style="left:253px;top:0;width:2px;height:19px;background:#d7dce0"></div></div>
<div class="t" style="left:1024.0px;top:733.9px;font-size:28.5px;letter-spacing:0.00px;color:#a8adb3;">Отправлен клиенту</div>
<div class="t" style="left:1650.0px;top:700.9px;font-size:32px;letter-spacing:-0.22px;color:#525c69;">1 200</div>
<svg style="left:0;top:128px" width="1800" height="620" viewBox="0 0 1800 620" fill="none" stroke="#525c69" stroke-width="2.7"><path d="M1745.3 577V599.5M1745.3 578.4H1751.5a5.5 5.5 0 0 1 0 11H1741M1741 595H1753.5"/></svg>
<div class="t" style="left:1832.0px;top:700.1px;font-size:33px;letter-spacing:0.00px;color:#2067b0;">Алексей Кружков</div>
<div class="t" style="left:2628.0px;top:700.1px;font-size:33px;letter-spacing:0.00px;color:#525c69;">2 минуты назад</div>
<div class="t" style="left:3153.0px;top:700.1px;font-size:33px;letter-spacing:0.00px;color:#2067b0;">Анастасия Андронова</div>
<div class="a" style="left:232px;top:824px;width:31px;height:32px;border:2.3px solid #666;border-radius:6px;background:#fff"></div>
<div class="a" style="left:292.5px;top:832.5px;width:31px;height:4px;background:#c9ccd1"></div>
<div class="a" style="left:292.5px;top:841.8px;width:31px;height:4px;background:#c9ccd1"></div>
<div class="a" style="left:292.5px;top:851.1px;width:31px;height:4px;background:#c9ccd1"></div>
<div class="t" style="left:359.0px;top:828.1px;font-size:33px;letter-spacing:0.00px;color:#2067b0;">5</div>
<div class="t" style="left:699.0px;top:828.1px;font-size:33px;letter-spacing:0.00px;color:#525c69;">счет 3</div>
<div class="a" style="left:1017px;top:824px;width:385px;height:23px;border:2px solid #c5ccd2;border-radius:5px;background:#fff;overflow:hidden"><div class="a" style="left:0;top:0;width:125px;height:19px;background:#3ba7ee"></div><div class="a" style="left:123px;top:0;width:2px;height:19px;background:#d7dce0"></div><div class="a" style="left:253px;top:0;width:2px;height:19px;background:#d7dce0"></div></div>
<div class="t" style="left:1024.0px;top:861.9px;font-size:28.5px;letter-spacing:0.00px;color:#a8adb3;">Новый</div>
<div class="t" style="left:1629.0px;top:828.9px;font-size:32px;letter-spacing:0.48px;color:#525c69;">54 075</div>
<svg style="left:0;top:256px" width="1800" height="620" viewBox="0 0 1800 620" fill="none" stroke="#525c69" stroke-width="2.7"><path d="M1745.3 577V599.5M1745.3 578.4H1751.5a5.5 5.5 0 0 1 0 11H1741M1741 595H1753.5"/></svg>
<div class="t" style="left:1832.0px;top:828.1px;font-size:33px;letter-spacing:0.00px;color:#2067b0;">Семен Королев</div>
<div class="t" style="left:2628.0px;top:828.1px;font-size:33px;letter-spacing:0.00px;color:#525c69;">2 минуты назад</div>
<div class="t" style="left:3153.0px;top:828.1px;font-size:33px;letter-spacing:0.00px;color:#2067b0;">Анастасия Андронова</div>
<div class="t" style="left:242.0px;top:967.8px;font-size:25px;letter-spacing:0.00px;color:#535c69;-webkit-text-stroke:0.7px #535c69;">ОТМЕЧЕНО:</div>
<div class="t" style="left:403.0px;top:967.8px;font-size:25px;letter-spacing:0.84px;color:#111;-webkit-text-stroke:0.6px #111;">0 / 3</div>
<div class="t" style="left:570.0px;top:967.8px;font-size:25px;letter-spacing:0.38px;color:#535c69;-webkit-text-stroke:0.7px #535c69;">ВСЕГО:</div>
<div class="t" style="left:670.0px;top:967.8px;font-size:25px;letter-spacing:0.90px;color:#2067b0;-webkit-text-stroke:0.7px #2067b0;">ПОКАЗАТЬ КОЛИЧЕСТВО</div>
<div class="t" style="left:1879.0px;top:968.3px;font-size:25px;letter-spacing:0.78px;color:#535c69;-webkit-text-stroke:0.7px #535c69;">СТРАНИЦЫ:</div>
<div class="t" style="left:2052.0px;top:968.3px;font-size:25px;letter-spacing:0.00px;color:#535c69;-webkit-text-stroke:0.7px #535c69;">1</div>
<div class="t" style="left:3295.0px;top:963.8px;font-size:25px;letter-spacing:0.64px;color:#535c69;-webkit-text-stroke:0.7px #535c69;">НА СТРАНИЦЕ:</div>
<div class="a" style="left:3496px;top:934px;width:161px;height:91px;border:2px solid #c9ced4;border-radius:10px;background:#fff"></div>
<div class="t" style="left:3532.0px;top:962.5px;font-size:31px;letter-spacing:-2.41px;color:#535c69;">20</div>
<svg style="left:3602px;top:974px" width="26" height="17" viewBox="0 0 26 17" fill="none" stroke="#535c69" stroke-width="4" stroke-linecap="round" stroke-linejoin="round"><path d="M3 3l10 10 10-10"/></svg>
<svg style="left:252px;top:1097px" width="25" height="25" viewBox="0 0 25 25" fill="none" stroke="#a9aeb4" stroke-width="5" stroke-linecap="round"><path d="M3 3l19 19M22 3 3 22"/></svg>
<div class="t" style="left:298.0px;top:1097.3px;font-size:28px;letter-spacing:-0.09px;color:#a9aeb4;font-weight:700;">УДАЛИТЬ</div>
<svg style="left:493px;top:1096px" width="26" height="26" viewBox="0 0 26 26"><path fill="#a9aeb4" d="M18 2l6 6L9 23H3v-6z"/><path fill="#fff" d="M3 23l3.5-1L4 19.5z"/></svg>
<div class="t" style="left:538.0px;top:1097.3px;font-size:28px;letter-spacing:-0.13px;color:#a9aeb4;font-weight:700;">РЕДАКТИРОВАТЬ</div>
<div class="a" style="left:819px;top:1064px;width:271px;height:92px;border:2px solid #dfe2e6;border-radius:8px"></div>
<div class="t" style="left:867.0px;top:1097.3px;font-size:28px;letter-spacing:-0.49px;color:#a9aeb4;font-weight:700;">ОБЗВОНИТЬ</div>
<div class="a" style="left:1122px;top:1064px;width:355.5px;height:92px;border:2px solid #dfe2e6;border-radius:8px"></div>
<div class="t" style="left:1170.0px;top:1097.3px;font-size:28px;letter-spacing:-0.25px;color:#a9aeb4;font-weight:700;">СОЗДАТЬ ОБЗВОН</div>
<div class="a" style="left:1510px;top:1064px;width:439px;height:92px;border:2px solid #dfe2e6;border-radius:8px"></div>
<div class="t" style="left:1546.5px;top:1096.1px;font-size:27px;letter-spacing:-0.08px;color:#a9aeb4;font-weight:700;">ВЫБЕРИТЕ ДЕЙСТВИЕ</div>
<svg style="left:1894px;top:1104px" width="26" height="17" viewBox="0 0 26 17" fill="none" stroke="#a9aeb4" stroke-width="4" stroke-linecap="round" stroke-linejoin="round"><path d="M3 3l10 10 10-10"/></svg>
<div class="a" style="left:1991px;top:1094px;width:29px;height:30px;border:3px solid #525c69;border-radius:6px;background:#fff"></div>
<div class="t" style="left:2032.0px;top:1099.3px;font-size:28px;letter-spacing:-0.81px;color:#535c69;font-weight:700;">ДЛЯ ВСЕХ</div>
<div class="a" style="left:3730px;top:147px;width:72px;height:72px;border-radius:50%;background:rgba(120,130,220,.28);overflow:hidden"></div>
<svg style="left:3747px;top:162px" width="38" height="42" viewBox="0 0 38 42" fill="none" stroke="#c6c9ee" stroke-width="3" stroke-linecap="round" stroke-linejoin="round"><path d="M7 30V18a12 12 0 0 1 24 0v12l3 4H4z"/><path d="M15 38a4 4 0 0 0 8 0"/><path d="M19 4v2"/></svg>
<div class="a" style="left:3730px;top:254px;width:72px;height:72px;border-radius:50%;background:rgba(120,130,220,.25);overflow:hidden"></div>
<div class="a" style="left:3730px;top:717px;width:72px;height:72px;border-radius:50%;background:#3a8cc8;overflow:hidden"><div class="a" style="left:14px;top:20px;width:30px;height:24px;border-radius:5px;background:rgba(175,185,200,.85)"></div><div class="a" style="left:28px;top:30px;width:26px;height:20px;border-radius:5px;background:rgba(160,180,205,.7)"></div><div class="a" style="left:20px;top:26px;width:16px;height:3px;background:#7aa04a"></div><div class="a" style="left:20px;top:33px;width:16px;height:3px;background:#7aa04a"></div></div>
<div class="a" style="left:3730px;top:823px;width:72px;height:72px;border-radius:50%;background:radial-gradient(ellipse 14px 18px at 36px 36px, #c89e9e 0 88%, rgba(0,0,0,0) 100%), radial-gradient(ellipse 24px 34px at 36px 42px, #5a2638 0 85%, rgba(0,0,0,0) 100%), linear-gradient(180deg,#a898a8 0%,#9a8a9a 60%,#4a3040 100%);overflow:hidden"></div>
<div class="a" style="left:3730px;top:930px;width:72px;height:72px;border-radius:50%;background:#3d8d72;overflow:hidden"><svg style="left:14px;top:14px" width="44" height="44" viewBox="0 0 44 44"><path fill="#a7b3df" d="M10 6c2-1 4 0 5 2l3 6c1 2 0 3-1 4l-2 2c2 4 5 7 9 9l2-2c1-1 2-2 4-1l6 3c2 1 3 3 2 5l-2 4c-1 2-4 3-7 2C18 36 8 26 5 15c-1-3 0-6 2-7z"/><path fill="none" stroke="#a7b3df" stroke-width="2.6" stroke-linecap="round" d="M26 4a14 14 0 0 1 14 14M25 10a8 8 0 0 1 9 9"/></svg></div>
<div class="a" style="left:3730px;top:1037px;width:72px;height:72px;border-radius:50%;background:#2c5fae;overflow:hidden"><svg style="left:14px;top:14px" width="44" height="44" viewBox="0 0 44 44"><path fill="#8ea6d8" d="M10 6c2-1 4 0 5 2l3 6c1 2 0 3-1 4l-2 2c2 4 5 7 9 9l2-2c1-1 2-2 4-1l6 3c2 1 3 3 2 5l-2 4c-1 2-4 3-7 2C18 36 8 26 5 15c-1-3 0-6 2-7z"/><path fill="none" stroke="#8ea6d8" stroke-width="2.6" stroke-linecap="round" d="M26 4a14 14 0 0 1 14 14M25 10a8 8 0 0 1 9 9"/></svg></div>
<div class="a" style="left:3730px;top:1144px;width:72px;height:72px;border-radius:50%;background:radial-gradient(circle at 55% 55%, #c2a08a 0 9px, rgba(0,0,0,0) 10px), linear-gradient(180deg,#4c6c95 0%,#6f7f8f 45%,#6b5e4a 60%,#2f3a3a 100%);overflow:hidden"></div>
<div class="a" style="left:3730px;top:1251px;width:72px;height:72px;border-radius:50%;background:linear-gradient(180deg,#3b5560 0%,#44604c 40%,#52625e 70%,#6c7a80 100%);overflow:hidden"></div>
<div class="a" style="left:3730px;top:1358px;width:72px;height:72px;border-radius:50%;background:#2e78b8;overflow:hidden"><svg style="left:24px;top:20px" width="24" height="32" viewBox="0 0 24 32"><path fill="#8aa3cf" d="M2 0h20v30l-10-8-10 8z"/></svg></div>
<div class="a" style="left:3580px;top:166px;width:119px;height:108px;border-radius:22px;border:11px solid #e8585a;background:#06127f"></div>
<div class="a" style="left:3611px;top:188px;width:75px;height:65px;border-radius:14px;background:rgba(140,150,230,.42)"></div>
<svg style="left:3630px;top:202px" width="37" height="37" viewBox="0 0 37 37" fill="none" stroke="#fff" stroke-width="2.4" stroke-linejoin="round"><circle cx="18.5" cy="18.5" r="5.2"/><path d="M29.57 15.38 L33.87 16.46 L33.87 20.54 L29.57 21.62 L28.53 24.12 L30.81 27.92 L27.92 30.81 L24.12 28.53 L21.62 29.57 L20.54 33.87 L16.46 33.87 L15.38 29.57 L12.88 28.53 L9.08 30.81 L6.19 27.92 L8.47 24.12 L7.43 21.62 L3.13 20.54 L3.13 16.46 L7.43 15.38 L8.47 12.88 L6.19 9.08 L9.08 6.19 L12.88 8.47 L15.38 7.43 L16.46 3.13 L20.54 3.13 L21.62 7.43 L24.12 8.47 L27.92 6.19 L30.81 9.08 L28.53 12.88Z"/></svg>
<div class="a" style="left:3278px;top:278px;width:522px;height:461px;border-radius:40px;background:#fff;box-shadow:0 18px 50px rgba(0,0,0,.28)"></div>
<div class="a" style="left:3278px;top:278px;width:522px;height:461px;border-radius:40px;background:radial-gradient(ellipse 380px 160px at 230px 40px, rgba(255,200,200,.45), rgba(255,255,255,0) 80%)"></div>
<div class="a" style="left:3646px;top:258px;width:0;height:0;border-left:8px solid transparent;border-right:8px solid transparent;border-bottom:8px solid #fff"></div>
<div class="a" style="left:3318px;top:321px;width:441px;height:2px;background:#ebecee"></div>
<div class="a" style="left:3318px;top:528px;width:441px;height:2px;background:#ebecee"></div>
<div class="a" style="left:3276px;top:327px;width:480px;height:110px;border-radius:32px;border:11px solid #e8585a;background:#fff;box-shadow:0 20px 70px 6px rgba(232,88,90,.2)"></div>
<div class="t" style="left:3320.0px;top:367.9px;font-size:32px;letter-spacing:0.17px;color:#2c2f33;">Экспорт счетов в CSV</div>
<div class="t" style="left:3320.0px;top:451.9px;font-size:32px;letter-spacing:0.22px;color:#2c2f33;">Экспорт счетов в Excel</div>
<div class="t" style="left:3320.6px;top:573.9px;font-size:32px;letter-spacing:0.29px;color:#2c2f33;">Шаблоны регулярных счетов</div>
<div class="t" style="left:3320.0px;top:657.2px;font-size:32px;letter-spacing:-0.63px;color:#2c2f33;">Счета</div>
<div class="a" style="left:3672px;top:213px;width:101px;height:101px;border-radius:50%;background:#e8585a"></div>
<svg style="left:0;top:0" width="3840" height="600" viewBox="0 0 3840 600" fill="#fff"><path d="M3703 243h18v42h-10V251.5h-8z"/><path d="M3727 243h18v42h-10V251.5h-8z"/></svg>
<div class="a" style="left:3714px;top:384px;width:102px;height:102px;border-radius:50%;background:#e8585a"></div>
<svg style="left:0;top:0" width="3840" height="600" viewBox="0 0 3840 600" fill="#fff"><path d="M3739 414h18v42h-10V422.5h-8z"/><path d="M3763 424.5c3-7.5 9.5-11.5 17-11.5 9.5 0 16 5.5 16 13.5 0 5-2.5 9-8 14.5l-7.5 7h16.5v8h-33v-6.5l16-15.5c3-3 4-5 4-7 0-3-2.5-5-6-5-4 0-7 2-8.5 5.5z"/></svg>
</body></html>
